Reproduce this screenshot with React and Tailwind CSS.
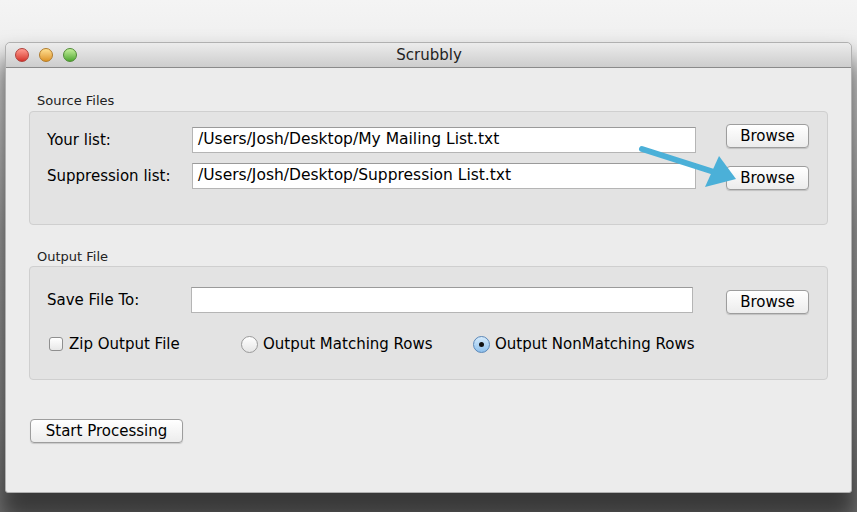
import React from "react";

const font = { fontFamily: '"DejaVu Sans", "Liberation Sans", sans-serif' };

const Button = ({ children, className = "" }) => (
    <button
        className={`h-[24px] rounded-[4px] border border-[#9d9d9d] bg-gradient-to-b from-[#ffffff] to-[#ececec] text-[15px] text-[#000] shadow-[0_1px_1px_#00000026] ${className}`}
    >
        {children}
    </button>
);

const Field = ({ value = "", className = "" }) => (
    <div
        className={`h-[26px] flex items-center px-[5px] bg-white border border-[#b5b5b5] border-t-[#9a9a9a] text-[15.5px] text-[#000] whitespace-nowrap overflow-hidden ${className}`}
    >
        {value}
    </div>
);

const Light = ({ from, to, border }) => (
    <div
        className={`w-[14px] h-[14px] rounded-full border ${border} bg-gradient-to-b ${from} ${to}`}
    />
);

const Radio = ({ checked }) =>
    checked ? (
        <div className="w-[17px] h-[17px] rounded-full border border-[#5a87b8] bg-gradient-to-b from-[#d6ebfb] to-[#8ec0ec] flex items-center justify-center">
            <div className="w-[5px] h-[5px] rounded-full bg-[#111]" />
        </div>
    ) : (
        <div className="w-[17px] h-[17px] rounded-full border border-[#9a9a9a] bg-gradient-to-b from-[#ffffff] to-[#e6e6e6]" />
    );

export default function App() {
    return (
        <div
            className="w-[857px] h-[512px] overflow-hidden bg-[linear-gradient(to_bottom,#f4f4f4_0%,#ececec_15%,#b4b4b4_45%,#969696_80%,#7c7c7c_100%)] px-[5px] pt-[42px]"
            style={font}
        >
            <div className="relative w-[847px] h-[451px] rounded-t-[5px] rounded-b-[3px] bg-[#ececec] border border-[#b0b0b0] shadow-[0_22px_24px_6px_#00000090] flex flex-col">
                {/* title bar */}
                <div className="h-[25px] shrink-0 rounded-t-[5px] bg-gradient-to-b from-[#ececec] to-[#cdcdcd] border-b border-[#8a8a8a] flex items-center relative">
                    <div className="flex items-center gap-[10px] pl-[9px]">
                        <Light from="from-[#ff9a90]" to="to-[#d4302a]" border="border-[#b0403a]" />
                        <Light from="from-[#ffe090]" to="to-[#dd9420]" border="border-[#b07a2a]" />
                        <Light from="from-[#c4f09a]" to="to-[#4ea82e]" border="border-[#4f8a35]" />
                    </div>
                    <div className="flex-1 text-center text-[15px] text-[#222] pr-[70px] pt-[1px]">Scrubbly</div>
                </div>

                {/* body */}
                <div className="flex flex-col pl-[23px] pr-[23px]">
                    <div className="pt-[25px] pl-[8px] h-[43px] text-[13px] leading-[16px] text-[#222]">Source Files</div>
                    <div className="h-[114px] rounded-[4px] border border-[#cfcfcf] bg-[#e3e3e3] pt-[15px] pl-[17px] flex flex-col gap-[10px]">
                        <div className="flex items-start">
                            <div className="w-[145px] h-[26px] flex items-center text-[15px] text-[#000]">Your list:</div>
                            <Field value="/Users/Josh/Desktop/My Mailing List.txt" className="w-[504px]" />
                            <Button className="ml-[30px] w-[83px] mt-[-3px]">Browse</Button>
                        </div>
                        <div className="flex items-start">
                            <div className="w-[145px] h-[26px] flex items-center text-[15px] text-[#000]">Suppression list:</div>
                            <Field value="/Users/Josh/Desktop/Suppression List.txt" className="w-[504px]" />
                            <Button className="ml-[30px] w-[83px] mt-[3px]">Browse</Button>
                        </div>
                    </div>

                    <div className="pt-[24px] pl-[8px] h-[41px] text-[13px] leading-[16px] text-[#222]">Output File</div>
                    <div className="h-[114px] rounded-[4px] border border-[#cfcfcf] bg-[#e3e3e3] pt-[20px] pl-[17px] flex flex-col gap-[20px]">
                        <div className="flex items-start">
                            <div className="w-[144px] h-[26px] flex items-center text-[15px] text-[#000]">Save File To:</div>
                            <Field className="w-[502px]" />
                            <Button className="ml-[33px] w-[83px] mt-[3px]">Browse</Button>
                        </div>
                        <div className="flex items-center h-[20px] text-[15px] text-[#000]">
                            <div className="flex items-center w-[194px] pl-[2px]">
                                <div className="w-[14px] h-[14px] rounded-[3px] border border-[#8f8f8f] bg-gradient-to-b from-[#ffffff] to-[#e8e8e8]" />
                                <span className="ml-[6px]">Zip Output File</span>
                            </div>
                            <div className="flex items-center w-[232px]">
                                <Radio />
                                <span className="ml-[5px]">Output Matching Rows</span>
                            </div>
                            <div className="flex items-center">
                                <Radio checked />
                                <span className="ml-[5px]">Output NonMatching Rows</span>
                            </div>
                        </div>
                    </div>

                    <div className="pt-[39px] pl-[1px]">
                        <Button className="w-[153px]">Start Processing</Button>
                    </div>
                </div>

                {/* annotation arrow */}
                <svg className="absolute left-0 top-0 pointer-events-none" width="847" height="451" viewBox="0 0 847 451">
                    <line x1="636" y1="106" x2="708" y2="129" stroke="#4bb0d8" strokeWidth="6" strokeLinecap="round" />
                    <polygon points="699,144 713,113 730,136" fill="#4bb0d8" />
                </svg>
            </div>
        </div>
    );
}
